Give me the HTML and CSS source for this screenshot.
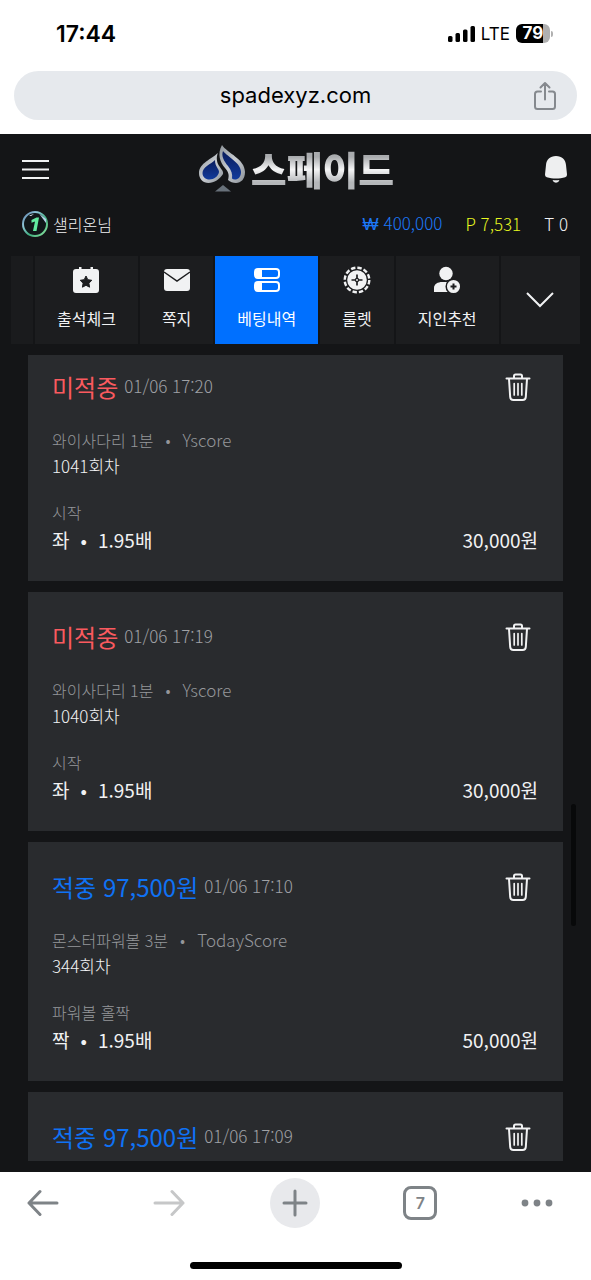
FILE: index.html
```html
<!DOCTYPE html>
<html lang="ko">
<head>
<meta charset="utf-8">
<meta name="viewport" content="width=device-width, initial-scale=1">
<title>스페이드 - 베팅내역</title>
<link rel="stylesheet" href="styles.css">
</head>
<body>
<svg class="sprite" aria-hidden="true">
  <symbol id="trash" viewBox="0 0 26 30">
    <g fill="none" stroke="#f1f2f3" stroke-width="2" stroke-linecap="round" stroke-linejoin="round">
      <path d="M1.500 6.500h23M9 6V4q0-1.500 1.500-1.500h5q1.500 0 1.500 1.500v2M4 7l1.200 18q.2 3 3.200 3h9.200q3 0 3.200-3L22 7"/>
      <path stroke-width="1.700" d="M9.200 11.500v11.500M13 11.500v11.500M16.800 11.500v11.500"/>
    </g>
  </symbol>
</svg>

<header class="browser-top">
  <div class="status">
    <time class="clock">17:44</time>
    <div class="status-right">
      <svg width="28" height="18" viewBox="0 0 28 18" aria-hidden="true"><rect y="11" width="4.500" height="6" rx="1.500"/><rect x="7.500" y="8" width="4.500" height="9" rx="1.500"/><rect x="15" y="4.500" width="4.500" height="12.500" rx="1.500"/><rect x="22.500" y="1" width="4.500" height="16" rx="1.500"/></svg>
      <span class="network">LTE</span>
      <span class="battery">79</span>
      <span class="battery-tip"></span>
    </div>
  </div>
  <div class="address">
    <span class="url">spadexyz.com</span>
    <button class="share" aria-label="공유"><svg width="24" height="30" viewBox="0 0 24 30" fill="none" stroke="#85898e" stroke-width="2" stroke-linejoin="round" stroke-linecap="round"><path d="M8 10.500H4.500Q2 10.500 2 13v12.500Q2 28 4.500 28h15q2.500 0 2.500-2.500V13q0-2.500-2.500-2.500H16M12 18.500V2M7.500 6.500L12 2l4.500 4.500"/></svg></button>
  </div>
</header>

<main class="site">
  <div class="site-bar">
    <button class="icon-button" aria-label="메뉴"><svg width="27" height="22" viewBox="0 0 27 22" stroke="#f1f2f3" stroke-width="2"><path d="M0 3h27M0 11.500h27M0 20h27"/></svg></button>
    <a class="logo" href="#">
      <svg width="48" height="48" viewBox="0 0 48 48" aria-hidden="true">
        <defs>
          <linearGradient id="steel" x1="0" y1="0" x2="1" y2="1"><stop offset="0" stop-color="#8d9399"/><stop offset=".5" stop-color="#c9cdd2"/><stop offset="1" stop-color="#8b9198"/></linearGradient>
          <linearGradient id="navy" x1="0" y1="0" x2="0" y2="1"><stop offset="0" stop-color="#0a1c5c"/><stop offset="1" stop-color="#123b9c"/></linearGradient>
        </defs>
        <path d="M19.700 8C14 14 1 18 1 28c0 6 4 10 9.500 10S22 34 25 29c1-3-3-6-5-10-2-5-1-8-.3-11z" fill="url(#steel)"/>
        <path d="M17 15C13 19 4.500 22 4.500 28c0 4 3 6.500 7 6.500 4.500 0 9-3.500 9.500-7.500.3-3-4-5-4-12z" fill="url(#navy)"/>
        <path d="M24 0c5 8 23 14 23 27 0 7-4 11-9 11-3 0-6-1-8-3 1.500-5 .5-8-3-12C22 17 19 9 24 0z" fill="url(#steel)"/>
        <path d="M25 6c5 6 18 12 18 21 0 5-3 7.500-6 7.500q-2 0-3-1c.7-4.500-.5-8-4-12.500C26 16 23 11 25 6z" fill="url(#navy)"/>
        <path d="M25 40l8 6.500H17z" fill="#68717a"/>
      </svg>
      <span class="logo-text">스페이드</span>
    </a>
    <button class="icon-button" aria-label="알림"><svg width="26" height="28" viewBox="0 0 26 28" fill="#eeeff0"><path d="M13 1c6 0 9.500 3.500 10 9l1 9.500q.2 2-1.800 2.700c-5.500 1.700-12.900 1.700-18.400 0Q1.800 21.500 2 19.500L3 10c.5-5.500 4-9 10-9zM9.500 25q3.500.5 7 0-.8 2.700-3.500 2.700T9.500 25z"/></svg></button>
  </div>

  <div class="account">
    <svg width="28" height="28" viewBox="0 0 28 28" aria-hidden="true">
      <defs><linearGradient id="badge" x1="0" y1="0" x2="1" y2="1"><stop offset="0" stop-color="#5a79a8"/><stop offset=".3" stop-color="#8fc7d8"/><stop offset=".6" stop-color="#3fae80"/><stop offset="1" stop-color="#92e8a0"/></linearGradient></defs>
      <circle cx="14" cy="14" r="12" fill="#101719" stroke="url(#badge)" stroke-width="2"/>
      <path d="M18 3.500l7 5.500v4z" fill="#b6d4ea"/><path d="M8 5.500l5-1.500-3 2z" fill="#e4f4ff"/>
      <path d="M10.500 10l5-2.500H18L15.500 21H12l2-9.500-3.500 1.200z" fill="#62eba0"/>
    </svg>
    <span class="nick">샐리온님</span>
    <span class="money"><span class="won">₩</span>400,000</span>
    <span class="points">P 7,531</span>
    <span class="tickets">T 0</span>
  </div>

  <nav class="tabs">
    <span class="tab-edge"></span>
    <a class="tab" href="#"><svg width="28" height="28" viewBox="0 0 28 28"><path fill="#f1f2f3" d="M4 3h3V1h2.500v2h9V1H21v2h3q3 0 3 3v18q0 3-3 3H4q-3 0-3-3V6q0-3 3-3z"/><path fill="#1c1d1f" stroke="#1c1d1f" stroke-linejoin="round" d="M14 10l1.800 3.700 4 .6-2.900 2.900.7 4-3.600-1.900-3.600 1.900.7-4-2.900-2.900 4-.6z"/></svg>출석체크</a>
    <a class="tab" href="#"><svg width="28" height="28" viewBox="0 0 28 28"><rect x="1" y="3" width="26" height="22" rx="3" fill="#f1f2f3"/><path d="M1 6l13 9 13-9" fill="none" stroke="#1c1d1f" stroke-width="1.500"/></svg>쪽지</a>
    <a class="tab active" href="#" aria-current="page"><svg width="28" height="28" viewBox="0 0 28 28"><g fill="none" stroke="#fff" stroke-width="2"><rect x="2" y="3" width="24" height="9" rx="3"/><rect x="2" y="16" width="24" height="9" rx="3"/></g><path fill="#fff" d="M4 3h5v9H4q-2 0-2-2V5q0-2 2-2zM4 16h5v9H4q-2 0-2-2v-5q0-2 2-2z"/></svg>베팅내역</a>
    <a class="tab" href="#"><svg width="28" height="28" viewBox="0 0 28 28"><circle cx="14" cy="14" r="12.300" fill="none" stroke="#f1f2f3" stroke-width="2.400" stroke-dasharray="4.400 2.040"/><circle cx="14" cy="14" r="9.800" fill="#f1f2f3"/><path d="M14 8.500v11M8.500 14h11" stroke="#1c1d1f" stroke-width="1.700"/><circle cx="14" cy="14" r="2.200" fill="#1c1d1f"/><circle cx="14" cy="14" r="1" fill="#f1f2f3"/></svg>룰렛</a>
    <a class="tab" href="#"><svg width="28" height="28" viewBox="0 0 28 28" fill="#f1f2f3"><circle cx="13" cy="7.500" r="6.700"/><path d="M1 26v-4c0-4 4-6 8-6h8c-3 3-3 7-1 10z"/><circle cx="20.500" cy="20.500" r="7.300" stroke="#1c1d1f" stroke-width="1.500"/><path d="M20.500 17.500v6M17.500 20.500h6" stroke="#1c1d1f" stroke-width="2"/></svg>지인추천</a>
    <button class="tab-more" aria-label="더보기"><svg width="28" height="18" viewBox="0 0 28 18" fill="none" stroke="#f1f2f3" stroke-width="2"><path d="M1 2l13 13L27 2"/></svg></button>
  </nav>

  <div class="history">
    <article class="bet bet-cut">
      <header class="bet-head"><h2 class="lose">미적중</h2><time>01/06 17:20</time><button class="delete" aria-label="삭제"><svg width="26" height="30"><use href="#trash"/></svg></button></header>
      <div class="game"><p class="dim">와이사다리 1분<i>•</i><span class="provider">Yscore</span></p><p class="round">1041회차</p></div>
      <p class="dim">시작</p>
      <div class="pick"><span>좌<i>•</i>1.95배</span><span>30,000원</span></div>
    </article>
    <article class="bet">
      <header class="bet-head"><h2 class="lose">미적중</h2><time>01/06 17:19</time><button class="delete" aria-label="삭제"><svg width="26" height="30"><use href="#trash"/></svg></button></header>
      <div class="game"><p class="dim">와이사다리 1분<i>•</i><span class="provider">Yscore</span></p><p class="round">1040회차</p></div>
      <p class="dim">시작</p>
      <div class="pick"><span>좌<i>•</i>1.95배</span><span>30,000원</span></div>
    </article>
    <article class="bet">
      <header class="bet-head"><h2 class="win">적중 97,500원</h2><time>01/06 17:10</time><button class="delete" aria-label="삭제"><svg width="26" height="30"><use href="#trash"/></svg></button></header>
      <div class="game"><p class="dim">몬스터파워볼 3분<i>•</i><span class="provider">TodayScore</span></p><p class="round">344회차</p></div>
      <p class="dim">파워볼 홀짝</p>
      <div class="pick"><span>짝<i>•</i>1.95배</span><span>50,000원</span></div>
    </article>
    <article class="bet">
      <header class="bet-head"><h2 class="win">적중 97,500원</h2><time>01/06 17:09</time><button class="delete" aria-label="삭제"><svg width="26" height="30"><use href="#trash"/></svg></button></header>
    </article>
  </div>
  <span class="scroll-thumb"></span>
</main>

<footer class="browser-bottom">
  <div class="toolbar">
    <button aria-label="뒤로"><svg width="32" height="28" viewBox="0 0 32 28" fill="none" stroke="#7e8387" stroke-width="3" stroke-linecap="round" stroke-linejoin="round"><path d="M30 14H2M13 2.500L2 14l11 11.500"/></svg></button>
    <button aria-label="앞으로" disabled><svg width="32" height="28" viewBox="0 0 32 28" fill="none" stroke="#c6c7c8" stroke-width="3" stroke-linecap="round" stroke-linejoin="round"><path d="M2 14h28M19 2.500L30 14 19 25.500"/></svg></button>
    <button class="new-tab" aria-label="새 탭"><svg width="26" height="28" viewBox="0 0 26 28" fill="none" stroke="#7e8387" stroke-width="3" stroke-linecap="round"><path d="M13 2v24M2 14h22"/></svg></button>
    <button aria-label="탭 7개"><span class="tab-count">7</span></button>
    <button class="more" aria-label="더보기"><svg width="32" height="8" viewBox="0 0 32 8" fill="#7e8387"><circle cx="4" cy="4" r="3.400"/><circle cx="16" cy="4" r="3.400"/><circle cx="28" cy="4" r="3.400"/></svg></button>
  </div>
  <div class="home-bar"></div>
</footer>
</body>
</html>
```
FILE: styles.css
```css
* { box-sizing: border-box; margin: 0; padding: 0; }
body {
  display: flex;
  flex-direction: column;
  height: 100vh;
  overflow: hidden;
  background: #fff;
  color: #000;
  font-family: "Noto Sans CJK KR", sans-serif;
}
button { border: 0; background: none; color: inherit; font: inherit; }
a { color: inherit; text-decoration: none; }
svg { display: block; flex: none; }
.sprite { position: absolute; width: 0; height: 0; }

/* Browser chrome */
.browser-top {
  flex: none;
  height: 134px;
  font-family: Inter, "Noto Sans CJK KR", sans-serif;
}
.status {
  display: flex;
  align-items: center;
  justify-content: space-between;
  height: 71px;
  padding: 0 38px 4px 56px;
}
.clock { font-size: 23px; font-weight: 600; }
.status-right { display: flex; align-items: center; }
.network { margin: 0 6px 0 5px; font-size: 17px; }
.battery {
  width: 34px;
  height: 19px;
  border-radius: 6px;
  background: linear-gradient(90deg, #000 79%, #b0b0b0 79%);
  color: #fff;
  font-size: 17px;
  font-weight: 700;
  line-height: 19px;
  text-align: center;
}
.battery-tip { width: 2px; height: 6px; margin-left: 1px; border-radius: 0 2px 2px 0; background: #b0b0b0; }
.address {
  position: relative;
  display: flex;
  align-items: center;
  justify-content: center;
  height: 49px;
  margin: 0 14px;
  border-radius: 25px;
  background: #e6e9ed;
}
.url { padding-bottom: 2px; font-size: 22px; line-height: 28px; }
.share { position: absolute; right: 20px; top: 10px; }

/* Site */
.site {
  position: relative;
  display: flex;
  flex-direction: column;
  flex: 1;
  min-height: 0;
  padding-bottom: 11px;
  background: #141517;
  color: #f1f2f3;
}
.site-bar {
  display: flex;
  align-items: center;
  justify-content: space-between;
  flex: none;
  height: 68px;
  padding: 2px 22px 0;
}
.logo { display: flex; align-items: center; gap: 5px; }
.logo-text {
  padding-bottom: 3px;
  background: linear-gradient(#a9abae 25%, #f4f4f5 50%, #b5b7ba 75%);
  background-clip: text;
  color: transparent;
  font-size: 39px;
  font-weight: 900;
  line-height: 48px;
}
.account {
  display: flex;
  align-items: center;
  flex: none;
  height: 44px;
  padding: 0 23px 0 21px;
  font-size: 17px;
  font-weight: 300;
  line-height: 26px;
}
.account span { padding-bottom: 1px; }
.nick { margin-left: 4px; margin-right: auto; font-size: 16px; }
.money { color: #1c78f8; }
.won { margin-right: 5px; font-family: "Liberation Sans", sans-serif; }
.points { margin: 0 23px; color: #e8f820; }

.tabs { display: flex; gap: 2px; flex: none; height: 88px; margin: 10px 11px 0; }
.tab-edge { flex: none; width: 22px; background: #1a1b1d; }
.tab {
  display: flex;
  flex-direction: column;
  align-items: center;
  gap: 12px;
  flex: none;
  padding: 10px 22px 0;
  background: #1c1d1f;
  font-size: 16px;
  line-height: 24px;
}
.active { background: #0070ff; color: #fff; }
.tab-more { display: grid; place-items: center; flex: 1; background: #1c1d1f; }

.history {
  display: flex;
  flex-direction: column;
  gap: 11px;
  flex: 1;
  min-height: 0;
  margin: 11px 28px 0;
  overflow: hidden;
}
.bet {
  flex: none;
  padding: 27px 25px 27px 24px;
  background: #292b2e;
  font-size: 16px;
  font-weight: 300;
  line-height: 25px;
}
.bet-cut { padding-top: 14px; }
.bet-head { display: flex; align-items: center; height: 34px; color: #a0a2a6; font-size: 17px; }
.bet-head h2 { margin-right: 6px; font-size: 24px; font-weight: 400; }
.bet-head .lose { color: #fa5a5f; }
.bet-head .win { color: #0f72f5; }
.bet-head time { padding-bottom: 1px; }
.delete { margin: 2px 7px 0 auto; }
.game { margin: 25px 0 22px; }
.dim { color: #95979b; }
.provider, .round { font-size: 17px; }
.provider { line-height: 1; }
.bet i { margin: 0 12px; font-style: normal; }
.pick {
  display: flex;
  justify-content: space-between;
  font-size: 19px;
  font-weight: 400;
  line-height: 29px;
}
.pick i { margin: 0 11px; }
.scroll-thumb {
  position: absolute;
  right: 15px;
  bottom: 246px;
  width: 5px;
  height: 122px;
  border-radius: 3px;
  background: #08090a;
}

/* Browser toolbar */
.browser-bottom { flex: none; height: 108px; }
.toolbar {
  display: flex;
  align-items: center;
  justify-content: space-between;
  height: 61px;
  padding: 0 20px 0 18px;
}
.toolbar button { display: grid; place-items: center; width: 50px; height: 50px; }
.toolbar .new-tab { border-radius: 50%; background: #e8e9ec; }
.toolbar .more { justify-items: start; }
.tab-count {
  width: 34px;
  height: 34px;
  border: 3px solid #7e8387;
  border-radius: 8px;
  color: #7e8387;
  font: 600 16px/28px Inter, sans-serif;
}
.home-bar { width: 212px; height: 7px; margin: 29px auto 0; border-radius: 4px; background: #000; }
```
